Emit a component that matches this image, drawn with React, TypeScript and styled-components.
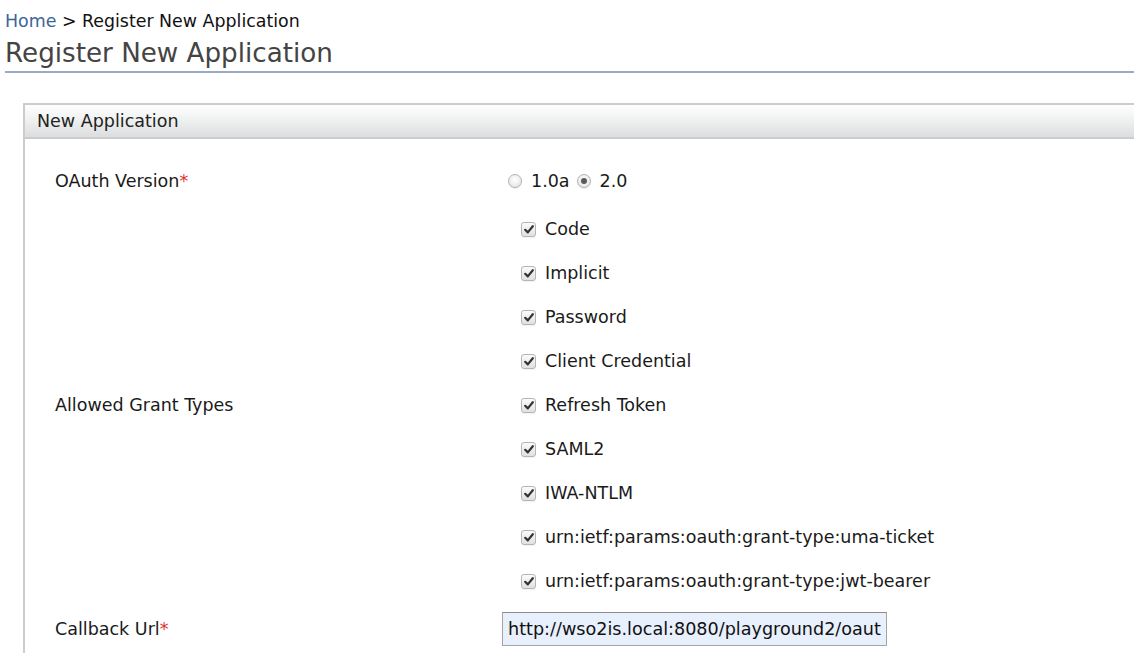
import React from "react";
import styled, { createGlobalStyle } from "styled-components";

const Global = createGlobalStyle`
  html, body { margin: 0; padding: 0; background: #fff; overflow: hidden; }
  body { font-family: "DejaVu Sans", "Liberation Sans", sans-serif; color: #1a1a1a; }
`;

const Page = styled.div`
  width: 1134px;
  height: 654px;
  overflow: hidden;
`;

const Breadcrumb = styled.div`
  padding: 10px 0 0 5px;
  font-size: 17.4px;
  line-height: 22px;
  color: #111;
  white-space: nowrap;
`;

const Crumb = styled.a`
  color: #3b6597;
  text-decoration: none;
`;

const Title = styled.h1`
  margin: 0 0 0 5px;
  padding: 5px 0 2px;
  font-weight: normal;
  font-size: 26.2px;
  line-height: 32px;
  color: #444;
  border-bottom: 2px solid #9aabc8;
  white-space: nowrap;
`;

const Panel = styled.section`
  margin: 30px 0 0 23px;
  width: 1140px;
  border: 2px solid #cccccc;
  border-right: none;
  border-bottom: none;
  background: #fff;
`;

const PanelHeader = styled.div`
  height: 32px;
  padding-left: 12px;
  display: flex;
  align-items: center;
  font-size: 17.5px;
  color: #222;
  background: linear-gradient(to bottom, #ffffff 0%, #eeefef 50%, #dcdddf 100%);
  border-bottom: 2px solid #cccccc;
`;

const Form = styled.div`
  display: grid;
  grid-template-columns: 448px 1fr;
  padding: 26px 0 0 30px;
`;

const Label = styled.div<{ $padTop?: number }>`
  align-self: center;
  padding-top: ${(p) => p.$padTop ?? 0}px;
  font-size: 17.5px;
  color: #1a1a1a;
  white-space: nowrap;
`;

const Req = styled.span`
  color: #e0322a;
`;

const Field = styled.div`
  display: flex;
  flex-direction: column;
`;

const RadioRow = styled.div`
  display: flex;
  align-items: center;
  height: 32px;
  padding-left: 5px;
  font-size: 17.5px;
`;

const RadioOpt = styled.label`
  display: flex;
  align-items: center;
  margin-right: 7px;
`;

const RadioCircle = styled.span<{ $on?: boolean }>`
  width: 14px;
  height: 14px;
  box-sizing: border-box;
  border-radius: 50%;
  border: 1px solid #b3b3b3;
  background: radial-gradient(circle at 50% 40%, #ffffff 0%, #ececec 60%, #dadada 100%);
  box-shadow: 0 1px 1px rgba(0, 0, 0, 0.08);
  margin-right: 9px;
  display: flex;
  align-items: center;
  justify-content: center;
  &::after {
    content: "";
    display: ${(p) => (p.$on ? "block" : "none")};
    width: 6px;
    height: 6px;
    border-radius: 50%;
    background: #5a5a5a;
  }
`;

const CheckList = styled.div`
  display: flex;
  flex-direction: column;
  padding: 10px 0 2px 18px;
`;

const CheckRow = styled.label`
  display: flex;
  align-items: center;
  height: 44px;
  font-size: 17.5px;
  white-space: nowrap;
`;

const CheckBox = styled.span`
  width: 15px;
  height: 15px;
  box-sizing: border-box;
  border: 1px solid #b5b5b5;
  border-radius: 3px;
  background: linear-gradient(to bottom, #fbfbfb, #e1e1e1);
  box-shadow: 0 1px 1px rgba(0, 0, 0, 0.06);
  margin-right: 9px;
  display: flex;
  align-items: center;
  justify-content: center;
`;

const InputRow = styled.div`
  height: 48px;
  display: flex;
  align-items: center;
`;

const UrlInput = styled.input`
  width: 385px;
  height: 34px;
  box-sizing: border-box;
  border: 1px solid #a5a5a5;
  border-top-color: #8c8c8c;
  background: #e8f0fe;
  font-family: "DejaVu Sans", "Liberation Sans", sans-serif;
  font-size: 17.6px;
  color: #111;
  padding: 0 5px;
  margin: 0 0 0 -1px;
  outline: none;
`;

const Check = () => (
  <CheckBox>
    <svg width="10" height="9" viewBox="0 0 10 9">
      <path d="M1.2 4.8 L3.8 7.4 L8.8 1.2" fill="none" stroke="#333" strokeWidth="2.2" strokeLinecap="round" strokeLinejoin="round" />
    </svg>
  </CheckBox>
);

const grants = [
  "Code",
  "Implicit",
  "Password",
  "Client Credential",
  "Refresh Token",
  "SAML2",
  "IWA-NTLM",
  "urn:ietf:params:oauth:grant-type:uma-ticket",
  "urn:ietf:params:oauth:grant-type:jwt-bearer",
];

export default function App() {
  return (
    <Page>
      <Global />
      <Breadcrumb>
        <Crumb href="#">Home</Crumb> &gt; Register New Application
      </Breadcrumb>
      <Title>Register New Application</Title>
      <Panel>
        <PanelHeader>New Application</PanelHeader>
        <Form>
          <Label>
            OAuth Version<Req>*</Req>
          </Label>
          <RadioRow>
            <RadioOpt>
              <RadioCircle />
              1.0a
            </RadioOpt>
            <RadioOpt>
              <RadioCircle $on />
              2.0
            </RadioOpt>
          </RadioRow>

          <Label $padTop={8}>Allowed Grant Types</Label>
          <Field>
            <CheckList>
              {grants.map((g) => (
                <CheckRow key={g}>
                  <Check />
                  {g}
                </CheckRow>
              ))}
            </CheckList>
          </Field>

          <Label>
            Callback Url<Req>*</Req>
          </Label>
          <InputRow>
            <UrlInput defaultValue="http://wso2is.local:8080/playground2/oauth2client" />
          </InputRow>
        </Form>
      </Panel>
    </Page>
  );
}
